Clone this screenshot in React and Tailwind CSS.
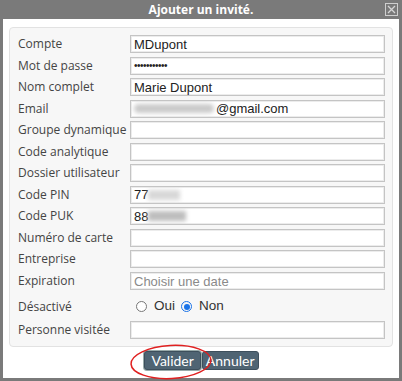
import React from "react";

const fields = [
  { label: "Compte", value: "MDupont" },
  { label: "Mot de passe", value: "•••••••••••", pwd: true },
  { label: "Nom complet", value: "Marie Dupont" },
  { label: "Email", email: true },
  { label: "Groupe dynamique" },
  { label: "Code analytique" },
  { label: "Dossier utilisateur" },
  { label: "Code PIN", prefix: "77", blur: "w-[32px] bg-[#d8d8d8]" },
  { label: "Code PUK", prefix: "88", blur: "w-[38px] bg-[#bdbdbd]" },
  { label: "Numéro de carte" },
  { label: "Entreprise" },
  { label: "Expiration", placeholder: "Choisir une date" },
];

const labelCls =
  "w-[112px] shrink-0 whitespace-nowrap text-[12px] text-[#444] font-['Open_Sans',sans-serif] leading-none";

const Field = ({ f }) => (
  <div className="flex items-center h-[18px]">
    <div className={labelCls}>{f.label}</div>
    <div className="flex-1 h-[18px] bg-white border border-[#c4c4c4] shadow-[inset_0_0_0_1px_#ececec] flex items-center px-[3px] font-['Liberation_Sans',Arial,sans-serif] text-[13px] text-[#222] leading-none overflow-hidden whitespace-nowrap">
      {f.email && (
        <>
          <span className="inline-block w-[80px] h-[9px] bg-[#cacaca] blur-[2px] rounded-full" />
          <span className="ml-[2px]">@gmail.com</span>
        </>
      )}
      {f.prefix && (
        <>
          <span>{f.prefix}</span>
          <span className={"inline-block h-[10px] blur-[2px] " + f.blur} />
        </>
      )}
      {f.value && <span className={f.pwd ? "text-[10px] tracking-[-0.5px]" : ""}>{f.value}</span>}
      {f.placeholder && <span className="text-[#8a8a8a]">{f.placeholder}</span>}
    </div>
  </div>
);

const Radio = ({ checked }) =>
  checked ? (
    <span className="w-[11px] h-[11px] rounded-full border-[1.5px] border-[#1a73e8] flex items-center justify-center">
      <span className="w-[6px] h-[6px] rounded-full bg-[#1a73e8]" />
    </span>
  ) : (
    <span className="w-[11px] h-[11px] rounded-full border border-[#777] bg-white" />
  );

export default function App() {
  return (
    <div className="w-[402px] h-[381px] bg-[#7a7a7a] px-[3px] pb-[3px] flex flex-col">
      <div className="h-[19px] relative flex items-center justify-center">
        <span className="text-white font-bold text-[12px] font-['Open_Sans',sans-serif]">
          Ajouter un invité.
        </span>
        <span className="absolute right-[1px] top-[3px] w-[13px] h-[13px] border border-[#cfcfcf] flex items-center justify-center">
          <svg width="9" height="9" viewBox="0 0 9 9">
            <path d="M1 1L8 8M8 1L1 8" stroke="#d6d6d6" strokeWidth="1.3" />
          </svg>
        </span>
      </div>
      <div className="flex-1 bg-white px-[6px] pt-[8px] flex flex-col">
        <div className="bg-[#f7f7f7] border border-[#e2e2e2] rounded-[4px] pl-[8px] pr-[7px] pt-[7px] pb-[7px] flex flex-col gap-[3.55px]">
          {fields.map((f) => (
            <Field key={f.label} f={f} />
          ))}
          <div className="flex items-center h-[22px] mt-[2px]">
            <div className={labelCls}>Désactivé</div>
            <div className="flex items-center pl-[6px] text-[13.5px] text-[#333] font-['Liberation_Sans',Arial,sans-serif]">
              <Radio />
              <span className="ml-[7px]">Oui</span>
              <span className="ml-[6px]">
                <Radio checked />
              </span>
              <span className="ml-[7px]">Non</span>
            </div>
          </div>
          <Field f={{ label: "Personne visitée" }} />
        </div>
        <div className="flex justify-center items-start pt-[4px] relative">
          <div className="flex gap-[1px] ml-[1px]">
            <button className="h-[19px] px-[6px] bg-[#4f6473] rounded-[3px] text-white text-[14px] leading-none font-['Lato',sans-serif] border border-[#3d4f5c] shadow-[0_0_0_1px_#9aa]">
              Valider
            </button>
            <button className="h-[19px] px-[3px] bg-[#4f6473] rounded-[3px] text-white text-[14px] leading-none font-['Lato',sans-serif] border border-[#3d4f5c]">
              Annuler
            </button>
          </div>
          <svg className="absolute left-[120px] top-[-4px]" width="84" height="38" viewBox="0 0 84 38">
            <ellipse cx="42" cy="19" rx="40" ry="16.5" fill="none" stroke="#e02020" strokeWidth="1.5" transform="rotate(-3 42 19)" />
          </svg>
        </div>
      </div>
    </div>
  );
}
